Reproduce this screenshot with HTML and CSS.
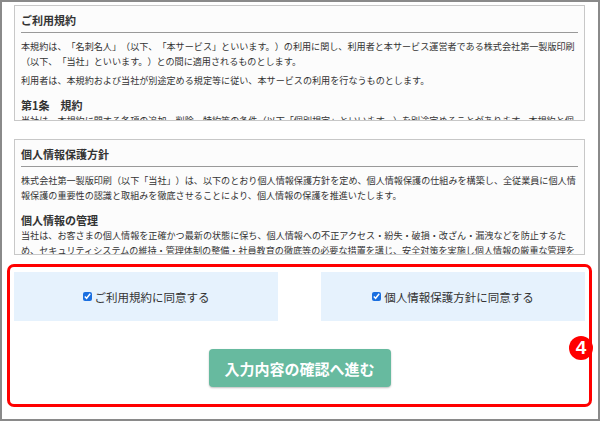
FILE: index.html
```html
<!DOCTYPE html>
<html lang="ja">
<head>
	<title>名刺名人 - 利用規約への同意</title>
	<meta charset="UTF-8">
	<meta name="viewport" content="width=device-width, initial-scale=1.0">
	<link rel="stylesheet" href="styles.css">
</head>
<body>
	<div class="frame">
		<section class="terms">
			<h2>ご利用規約</h2>
			<p>本規約は、「名刺名人」（以下、「本サービス」といいます。）の利用に関し、利用者と本サービス運営者である株式会社第一製版印刷（以下、「当社」といいます。）との間に適用されるものとします。</p>
			<p>利用者は、本規約および当社が別途定める規定等に従い、本サービスの利用を行なうものとします。</p>
			<h3>第1条　規約</h3>
			<p>当社は、本規約に関する各項の追加、削除、特約等の条件（以下「個別規定」といいます。）を別途定めることがあります。本規約と個別規定の内容が異なる場合は、個別規定の内容が優先して適用されるものとします。</p>
			<h3>第2条　利用登録</h3>
			<p>本サービスの利用を希望する者は、本規約に同意の上、当社の定める方法によって利用登録を申請するものとします。</p>
			<h3>第3条　IDおよびパスワードの管理</h3>
			<p>利用者は、自己の責任において、本サービスのIDおよびパスワードを適切に管理するものとします。</p>
			<h3>第4条　料金および支払方法</h3>
			<p>利用者は、本サービスの有料部分の対価として、当社が別途定める利用料金を、当社が指定する方法により支払うものとします。</p>
			<h3>第5条　禁止事項</h3>
			<p>利用者は、本サービスの利用にあたり、法令または公序良俗に違反する行為、犯罪行為に関連する行為その他当社が不適切と判断する行為をしてはなりません。</p>
			<h3>第6条　本サービスの提供の停止等</h3>
			<p>当社は、システムの保守点検または更新を行う場合その他必要と判断した場合には、利用者に事前に通知することなく本サービスの全部または一部の提供を停止または中断することができるものとします。</p>
			<h3>第7条　利用制限および登録抹消</h3>
			<p>当社は、利用者が本規約のいずれかの条項に違反した場合には、事前の通知なく、本サービスの利用を制限し、または利用者としての登録を抹消することができるものとします。</p>
			<h3>第8条　免責事項</h3>
			<p>当社は、本サービスに起因して利用者に生じたあらゆる損害について、当社の故意または重過失による場合を除き、一切の責任を負いません。</p>
			<h3>第9条　サービス内容の変更等</h3>
			<p>当社は、利用者に通知することなく、本サービスの内容を変更しまたは本サービスの提供を中止することができるものとします。</p>
			<h3>第10条　利用規約の変更</h3>
			<p>当社は、必要と判断した場合には、利用者に通知することなくいつでも本規約を変更することができるものとします。</p>
			<h3>第11条　個人情報の取扱い</h3>
			<p>当社は、本サービスの利用によって取得する個人情報については、当社「個人情報保護方針」に従い適切に取り扱うものとします。</p>
			<h3>第12条　準拠法・裁判管轄</h3>
			<p>本規約の解釈にあたっては、日本法を準拠法とします。本サービスに関して紛争が生じた場合には、当社の本店所在地を管轄する裁判所を専属的合意管轄とします。</p>
		</section>
		<section class="terms terms-last">
			<h2>個人情報保護方針</h2>
			<p>株式会社第一製版印刷（以下「当社」）は、以下のとおり個人情報保護方針を定め、個人情報保護の仕組みを構築し、全従業員に個人情報保護の重要性の認識と取組みを徹底させることにより、個人情報の保護を推進いたします。</p>
			<h3>個人情報の管理</h3>
			<p>当社は、お客さまの個人情報を正確かつ最新の状態に保ち、個人情報への不正アクセス・紛失・破損・改ざん・漏洩などを防止するため、セキュリティシステムの維持・管理体制の整備・社員教育の徹底等の必要な措置を講じ、安全対策を実施し個人情報の厳重な管理を行ないます。</p>
			<h3>個人情報の利用目的</h3>
			<p>お客さまからお預かりした個人情報は、当社からのご連絡や業務のご案内やご質問に対する回答として、電子メールや資料のご送付に利用いたします。</p>
			<h3>個人情報の第三者への開示・提供の禁止</h3>
			<p>当社は、お客さまよりお預かりした個人情報を適切に管理し、お客さまの同意がある場合、法令に基づき開示することが必要である場合を除き、個人情報を第三者に開示いたしません。</p>
			<h3>個人情報の安全対策</h3>
			<p>当社は、個人情報の正確性及び安全性確保のために、セキュリティに万全の対策を講じています。</p>
			<h3>ご本人の照会</h3>
			<p>お客さまがご本人の個人情報の照会・修正・削除などをご希望される場合には、ご本人であることを確認の上、対応させていただきます。</p>
			<h3>法令、規範の遵守と見直し</h3>
			<p>当社は、保有する個人情報に関して適用される日本の法令、その他規範を遵守するとともに、本ポリシーの内容を適宜見直し、その改善に努めます。</p>
			<h3>お問い合せ</h3>
			<p>当社の個人情報の取扱に関するお問い合せは、当社お客さま窓口までご連絡ください。</p>
			<p>株式会社第一製版印刷</p>
		</section>
		<div class="agree">
			<div class="agree-options">
				<label class="agree-item"><input type="checkbox" checked>ご利用規約に同意する</label>
				<label class="agree-item"><input type="checkbox" checked>個人情報保護方針に同意する</label>
			</div>
			<div class="agree-submit">
				<button type="button" class="btn-confirm">入力内容の確認へ進む</button>
			</div>
			<span class="step-badge">4</span>
		</div>
	</div>
</body>
</html>
```

FILE: styles.css
```css
html, body {
	margin: 0;
	padding: 0;
}
body {
	background-color: #fff;
	color: #333;
	font-family: "Noto Sans CJK JP", "Noto Sans", sans-serif;
	text-spacing-trim: space-all;
}
.frame {
	height: 421px;
	box-sizing: border-box;
	border: 2px solid #8a8a8a;
	padding: 3px 6px 0 5px;
}
.terms {
	height: 116px;
	box-sizing: border-box;
	margin: 0 7px 18px;
	padding: 6px 6px 5px;
	border: 1px solid #c8c8c8;
	background-color: #fcfcfc;
	overflow-y: scroll;
}
.terms-last {
	margin-bottom: 9px;
}
.terms::-webkit-scrollbar {
	width: 10px;
}
.terms::-webkit-scrollbar-track {
	background-color: #f8f8f8;
	border-left: 1px solid #e8e8e8;
}
.terms::-webkit-scrollbar-thumb {
	background-color: #c4c4c4;
	border: 2px solid transparent;
	border-radius: 5px;
	background-clip: padding-box;
}
.terms h2 {
	margin: 0 0 6px;
	padding-bottom: 4px;
	border-bottom: 1px solid #999;
	font-size: 11px;
	line-height: 16px;
	font-weight: bold;
}
.terms h3 {
	margin: 9px 0 0;
	font-size: 11px;
	line-height: 16px;
	font-weight: bold;
}
.terms p {
	margin: 0 0 4px;
	font-size: 9.1px;
	line-height: 15px;
}
.agree {
	position: relative;
	border: 3px solid #f00;
	border-radius: 7px;
	padding: 5px 4px 17px;
}
.agree-options {
	display: grid;
	grid-template-columns: 1fr 1fr;
	gap: 43px;
}
.agree-item {
	height: 49px;
	display: flex;
	align-items: center;
	justify-content: center;
	background-color: #e6f2fd;
	font-size: 11.5px;
}
.agree-item input {
	width: 9px;
	height: 9px;
	margin: 0 3px 0 0;
	accent-color: #1a6fe0;
}
.agree-submit {
	display: flex;
	justify-content: center;
	margin-top: 28px;
}
.btn-confirm {
	width: 182px;
	height: 38px;
	border: 0;
	border-radius: 4px;
	background-color: #67ba9f;
	color: #fff;
	font-family: "Noto Sans CJK JP", "Noto Sans", sans-serif;
	font-size: 15px;
	font-weight: bold;
	box-shadow: 0 1px 2px rgba(0, 0, 0, 0.25);
}
.step-badge {
	position: absolute;
	top: 69px;
	right: -4px;
	width: 24px;
	height: 24px;
	border-radius: 50%;
	background-color: #f00;
	color: #fff;
	font-family: "Liberation Sans", Arial, sans-serif;
	font-size: 19px;
	font-weight: bold;
	line-height: 24px;
	text-align: center;
}
```
